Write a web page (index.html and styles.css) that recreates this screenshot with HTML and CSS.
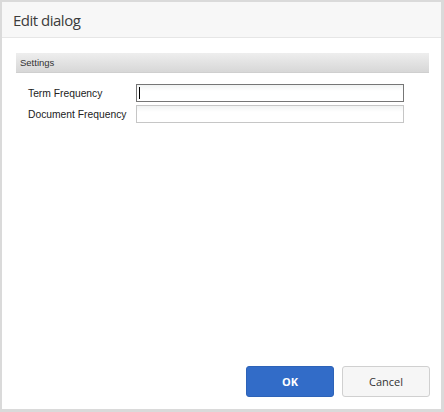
FILE: index.html
```html
<!DOCTYPE html>
<html>
<head>
<meta charset="utf-8">
<link rel="stylesheet" href="styles.css">
</head>
<body>
<div class="dialog">
  <div class="header"><span class="title">Edit dialog</span></div>
  <div class="content">
    <div class="section">Settings</div>
    <div class="form">
      <label class="label" for="tf">Term Frequency</label>
      <div class="input focused" id="tf"><span class="caret"></span></div>
      <label class="label" for="df">Document Frequency</label>
      <div class="input" id="df"></div>
    </div>
  </div>
  <div class="footer">
    <button class="btn primary">OK</button>
    <button class="btn">Cancel</button>
  </div>
</div>
</body>
</html>
```
FILE: styles.css
```css
html, body {
  margin: 0;
  padding: 0;
  background: #ffffff;
}
.dialog {
  box-sizing: border-box;
  width: 444px;
  height: 412px;
  border-style: solid;
  border-color: #dadada;
  border-width: 2px 3px 3px 2px;
  display: flex;
  flex-direction: column;
  font-family: "Liberation Sans", Arial, sans-serif;
  color: #333;
}
.header {
  height: 35px;
  background: #f7f7f7;
  border-bottom: 1px solid #e6e6e6;
  display: flex;
  align-items: center;
  padding-left: 11px;
}
.title {
  font-family: "Open Sans", sans-serif;
  font-size: 15px;
  color: #3c3c3c;
  letter-spacing: -0.5px;
}
.content {
  flex: 1;
  padding: 15px 12px 0 14px;
}
.section {
  height: 19px;
  background: linear-gradient(#eeeeee, #d7d7d7);
  border-bottom: 1px solid #cfcfcf;
  font-size: 9.5px;
  line-height: 19px;
  padding-left: 4px;
  color: #333;
}
.form {
  display: grid;
  grid-template-columns: 108px 268px;
  row-gap: 3px;
  padding-left: 12px;
  margin-top: 11px;
  align-items: center;
}
.label {
  font-size: 10.3px;
  color: #222;
}
.input {
  box-sizing: border-box;
  height: 18px;
  border: 1px solid #c6c6c6;
  background: linear-gradient(#f1f3f3, #ffffff 6px);
  position: relative;
}
.input.focused {
  border-color: #767676;
}
.caret {
  position: absolute;
  left: 2px;
  top: 2px;
  width: 1px;
  height: 12px;
  background: #000;
}
.footer {
  display: flex;
  justify-content: flex-end;
  gap: 8px;
  padding: 0 11px 12px 0;
}
.btn {
  box-sizing: border-box;
  width: 88px;
  height: 31px;
  border: 1px solid #d0d0d0;
  border-radius: 3px;
  background: #f6f6f6;
  font-family: "Open Sans", sans-serif;
  font-size: 11px;
  color: #333;
  padding: 0;
}
.btn.primary {
  background: #326cc8;
  border-color: #2d63b8;
  color: #ffffff;
  font-weight: bold;
}
```
